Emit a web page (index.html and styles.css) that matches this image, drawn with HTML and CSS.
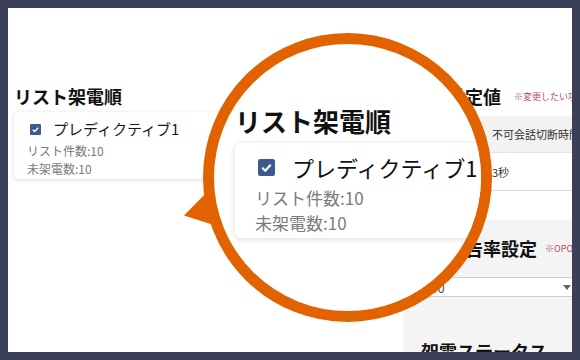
FILE: index.html
```html
<!DOCTYPE html>
<html lang="ja">
<head>
<meta charset="utf-8">
<link rel="stylesheet" href="styles.css">
</head>
<body>
<div class="screen">
  <section class="left-col">
    <h2 class="heading">リスト架電順</h2>
    <div class="card">
      <div class="card-row">
        <svg class="check" viewBox="0 0 16 16"><rect width="16" height="16" rx="2" fill="#3b5b8f"/><path d="M4 8.3 L6.8 11 L12 5.4" stroke="#fff" stroke-width="2" fill="none"/></svg>
        <span class="card-title">プレディクティブ1</span>
      </div>
      <div class="card-meta">リスト件数:10</div>
      <div class="card-meta">未架電数:10</div>
    </div>
  </section>
  <section class="right-col">
    <div class="head-row">
      <h2 class="heading heading-indent">設定値</h2>
      <span class="note">※変更したい項目をクリックしてください</span>
    </div>
    <div class="table">
      <div class="cell head"></div>
      <div class="cell head">不可会話切断時間</div>
      <div class="cell"></div>
      <div class="cell">3秒</div>
    </div>
    <div class="panel">
      <div class="head-row">
        <h2 class="heading heading-indent">予告率設定</h2>
        <span class="note note-tight">※OPO設定時のみ有効</span>
      </div>
      <div class="select"><span>100</span><span class="caret"></span></div>
      <h2 class="heading status">架電ステータス</h2>
    </div>
  </section>

  <svg class="tail" viewBox="0 0 50 60" width="50" height="60"><polygon points="6,37.5 34,9 42,49" fill="#e26200"/></svg>
  <div class="lens">
    <h2 class="lens-heading">リスト架電順</h2>
    <div class="lens-card">
      <div class="lens-row">
        <svg class="lens-check" viewBox="0 0 16 16"><rect width="16" height="16" rx="2" fill="#3b5b8f"/><path d="M4 8.3 L6.8 11 L12 5.4" stroke="#fff" stroke-width="2" fill="none"/></svg>
        <span class="lens-title">プレディクティブ1</span>
      </div>
      <div class="lens-meta">リスト件数:10</div>
      <div class="lens-meta">未架電数:10</div>
    </div>
  </div>
</div>
</body>
</html>
```
FILE: styles.css
```css
* { box-sizing: border-box; }
html, body { margin: 0; padding: 0; }
body {
  background: #3c3f5a;
  width: 580px;
  height: 360px;
  padding: 8px;
  font-family: "Noto Sans CJK JP", "Noto Sans", sans-serif;
  overflow: hidden;
}
.screen {
  position: relative;
  width: 564px;
  height: 344px;
  background: #fff;
  overflow: hidden;
  display: grid;
  grid-template-columns: 389px 169px;
  align-items: start;
  padding: 76px 0 0 6px;
}
.heading {
  margin: 0;
  font-size: 18px;
  line-height: 24px;
  font-weight: 700;
  color: #111;
  white-space: nowrap;
}
.left-col { display: flex; flex-direction: column; }
.card {
  margin-top: 4px;
  width: 250px;
  height: 67px;
  padding: 6px 13px 1px;
  background: #fff;
  border-radius: 4px;
  box-shadow: 0 1px 4px rgba(0,0,0,0.16);
}
.card-row {
  display: flex;
  align-items: center;
  height: 22px;
  margin-bottom: 2px;
}
.check { width: 11px; height: 11px; margin-left: 3px; margin-right: 12px; flex: none; }
.card-title { font-size: 15px; line-height: 22px; color: #1a1a1a; white-space: nowrap; }
.card-meta { font-size: 12px; line-height: 18px; color: #7a7a7a; white-space: nowrap; }

.right-col { display: flex; flex-direction: column; }
.head-row { display: flex; align-items: center; white-space: nowrap; }
.heading-indent { margin-left: 44px; }
.note { font-size: 9px; color: #b0505c; margin-left: 13px; white-space: nowrap; }
.note-tight { margin-left: 8px; }
.table {
  margin-top: 8px;
  display: grid;
  grid-template-columns: 79px 200px;
  width: 279px;
}
.cell {
  height: 38px;
  padding-left: 10px;
  display: flex;
  align-items: center;
  font-size: 11px;
  color: #333;
  white-space: nowrap;
  border-bottom: 1px solid #dcdcdc;
}
.cell.head { height: 37px; background: #f2f2f2; border-bottom-color: #e4e4e4; }
.panel {
  margin-top: 29px;
  width: 200px;
  height: 140px;
  background: #f4f4f4;
  padding-top: 16px;
}
.select {
  margin-top: 17px;
  height: 20px;
  width: 200px;
  background: #fff;
  border-top: 1px solid #cfcfcf;
  border-bottom: 1px solid #cfcfcf;
  display: flex;
  align-items: center;
  padding-left: 20px;
  font-size: 13px;
  color: #555;
  position: relative;
}
.caret {
  position: absolute;
  left: 160px;
  top: 7px;
  border-left: 4px solid transparent;
  border-right: 4px solid transparent;
  border-top: 5px solid #666;
}
.status { margin-top: 42px; margin-left: 18px; }

.tail {
  position: absolute;
  left: 170px;
  top: 170px;
}
.lens {
  position: absolute;
  left: 195px;
  top: 25px;
  width: 289px;
  height: 289px;
  border: 11px solid #e26200;
  border-radius: 50%;
  background: #fff;
  overflow: hidden;
  padding: 60px 0 0 21px;
}
.lens-heading {
  margin: 0;
  font-size: 26px;
  line-height: 34px;
  font-weight: 700;
  color: #111;
  white-space: nowrap;
}
.lens-card {
  margin-top: 5px;
  width: 330px;
  height: 95px;
  padding: 10px 20px 3px;
  background: #fff;
  border-radius: 6px;
  box-shadow: 0 1px 6px rgba(0,0,0,0.15);
}
.lens-row { display: flex; align-items: center; height: 28px; margin-bottom: 4px; }
.lens-check { width: 17px; height: 17px; margin-left: 3px; margin-right: 17px; flex: none; }
.lens-title { font-size: 22px; line-height: 28px; color: #111; white-space: nowrap; }
.lens-meta { font-size: 17px; line-height: 25px; color: #7a7a7a; white-space: nowrap; }
```
